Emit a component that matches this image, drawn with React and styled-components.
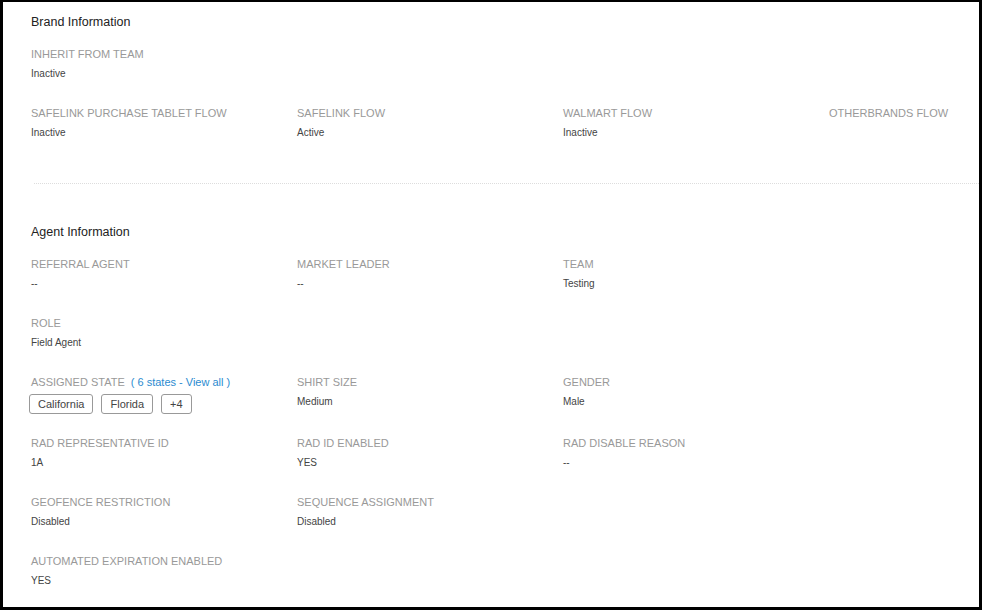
import React from 'react'
import styled, { createGlobalStyle } from 'styled-components'

const GlobalStyle = createGlobalStyle`
  html, body {
    margin: 0;
    padding: 0;
    background: #fff;
  }
  body {
    font-family: "Liberation Sans", Arial, Helvetica, sans-serif;
    color: #333;
  }
`

const brandRows = [
  [{ label: 'Inherit from team', value: 'Inactive' }],
  [
    { label: 'Safelink purchase tablet flow', value: 'Inactive' },
    { label: 'Safelink flow', value: 'Active' },
    { label: 'Walmart flow', value: 'Inactive' },
    { label: 'Otherbrands flow', value: '' },
  ],
]

const agentRows = [
  [
    { label: 'Referral agent', value: '--' },
    { label: 'Market leader', value: '--' },
    { label: 'Team', value: 'Testing' },
  ],
  [{ label: 'Role', value: 'Field Agent' }],
  [
    { label: 'Assigned state', states: ['California', 'Florida'], more: 4, total: 6 },
    { label: 'Shirt size', value: 'Medium' },
    { label: 'Gender', value: 'Male' },
  ],
  [
    { label: 'Rad representative id', value: '1A' },
    { label: 'Rad id enabled', value: 'YES' },
    { label: 'Rad disable reason', value: '--' },
  ],
  [
    { label: 'Geofence restriction', value: 'Disabled' },
    { label: 'Sequence assignment', value: 'Disabled' },
  ],
  [{ label: 'Automated expiration enabled', value: 'YES' }],
]

const Field = ({ item }) => (
  <FieldBox>
    <Label>
      {item.label}
      {item.total && <ViewAll href="#">( {item.total} states - View all )</ViewAll>}
    </Label>
    {item.states ? (
      <Chips>
        {item.states.map((s) => (
          <Chip key={s}>{s}</Chip>
        ))}
        <Chip>+{item.more}</Chip>
      </Chips>
    ) : (
      <Value>{item.value}</Value>
    )}
  </FieldBox>
)

const Section = ({ title, rows }) => (
  <SectionBox>
    <SectionTitle>{title}</SectionTitle>
    <Rows>
      {rows.map((row, i) => (
        <Row key={i}>
          {row.map((item) => (
            <Field key={item.label} item={item} />
          ))}
        </Row>
      ))}
    </Rows>
  </SectionBox>
)

const App = () => {
  return (
    <>
      <GlobalStyle />
      <Frame>
        <Section title="Brand Information" rows={brandRows} />
        <Divider />
        <Section title="Agent Information" rows={agentRows} />
      </Frame>
    </>
  )
}

const Frame = styled.div`
  box-sizing: border-box;
  width: 982px;
  height: 610px;
  border: 3px solid #000;
  border-top-width: 2px;
  padding: 12px 0 0 28px;
  overflow: hidden;
`

const SectionBox = styled.section`
  display: flex;
  flex-direction: column;
`

const SectionTitle = styled.h3`
  margin: 0 0 17px;
  font-size: 12.5px;
  line-height: 16px;
  font-weight: 400;
  color: #222;
`

const Rows = styled.div`
  display: flex;
  flex-direction: column;
  gap: 25px;
`

const Row = styled.div`
  display: grid;
  grid-template-columns: repeat(4, 266px);
`

const FieldBox = styled.div`
  display: flex;
  flex-direction: column;
  gap: 6px;
`

const Label = styled.div`
  font-size: 11px;
  line-height: 14px;
  color: #999;
  text-transform: uppercase;
  white-space: nowrap;
`

const ViewAll = styled.a`
  margin-left: 6px;
  color: #2b8bd0;
  text-decoration: none;
  text-transform: none;
`

const Value = styled.div`
  font-size: 10px;
  line-height: 14px;
  min-height: 14px;
  color: #444;
`

/* the chip row sits a little tighter than a plain value */
const Chips = styled.div`
  display: flex;
  gap: 8px;
  margin: -1px 0 -3px -2px;
`

const Chip = styled.span`
  box-sizing: border-box;
  height: 20px;
  padding: 0 8px;
  display: inline-flex;
  align-items: center;
  border: 1px solid #999;
  border-radius: 3px;
  font-size: 11px;
  color: #444;
`

const Divider = styled.hr`
  margin: 43px 0 40px 3px;
  border: 0;
  border-top: 1px dotted #ddd;
`

export default App
